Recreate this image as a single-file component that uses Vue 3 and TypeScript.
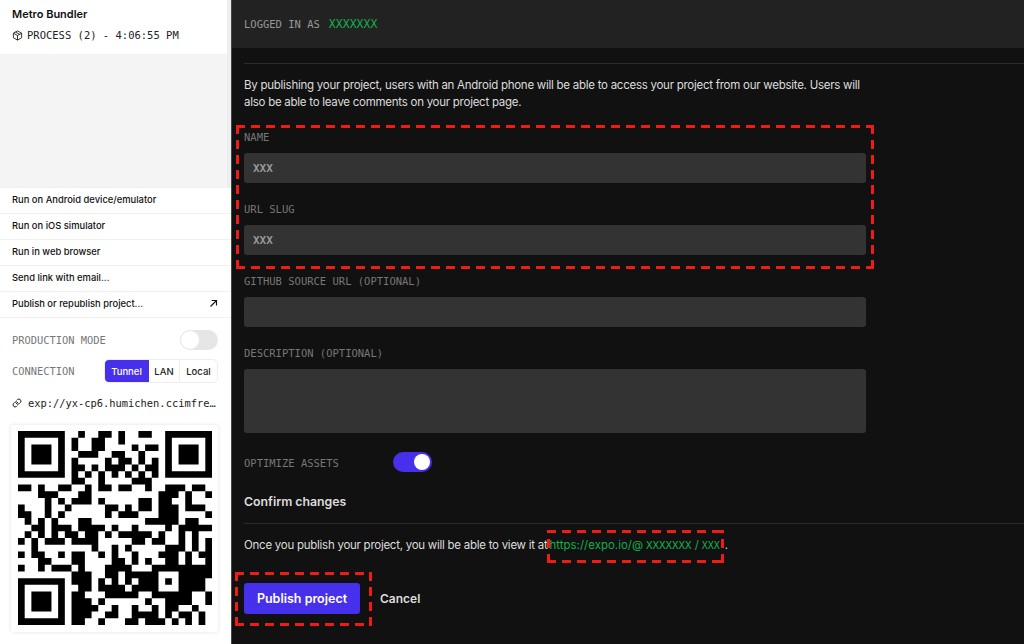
<script setup lang="ts">
const qrCells: number[][] = [
  [9, 12, 13, 15, 18, 19],
  [8, 11, 12, 15],
  [8, 11, 12, 17, 19, 20],
  [9, 10, 11, 14, 15, 18],
  [8, 13, 15, 16, 18, 20],
  [8, 9, 11, 13, 14, 15, 17, 19, 20],
  [8, 10, 12, 14, 16, 18, 20],
  [8, 9, 12, 17, 18, 19],
  [0, 1, 3, 6, 7, 10, 12, 13, 15, 16, 19, 22, 23, 24, 26, 27],
  [3, 4, 5, 9, 10, 21, 22, 23, 25, 28],
  [4, 6, 8, 9, 10, 12, 18, 19, 21, 22, 25],
  [0, 4, 7, 13, 14, 16, 18, 19, 21, 22, 23, 25, 26, 27],
  [0, 1, 4, 6, 13, 15, 16, 17, 21, 22, 23, 28],
  [1, 3, 5, 9, 10, 19, 20, 21, 22, 23, 25, 26],
  [2, 3, 5, 6, 7, 9, 10, 11, 12, 14, 17, 22, 24, 25, 26, 27, 28],
  [1, 3, 5, 7, 8, 10, 11, 13, 15, 16, 17, 18, 19, 21, 24, 26],
  [0, 2, 4, 5, 6, 8, 9, 10, 11, 17, 18, 20, 21, 24, 26, 28],
  [2, 11, 14, 16, 22, 23, 24, 26, 28],
  [0, 2, 3, 6, 8, 9, 12, 14, 17, 21, 22, 23, 25, 27, 28],
  [3, 4, 8, 9, 14, 15, 17, 19, 22, 23, 25, 28],
  [0, 3, 5, 6, 7, 9, 13, 14, 15, 16, 20, 21, 22, 23, 24, 25, 26, 27, 28],
  [8, 9, 10, 13, 14, 16, 17, 18, 19, 20, 24, 25, 26, 27, 28],
  [8, 9, 10, 12, 14, 16, 18, 19, 20, 22, 24, 25, 26, 27],
  [9, 10, 12, 13, 14, 15, 17, 18, 19, 20, 24, 25, 26, 27],
  [8, 9, 13, 14, 15, 16, 17, 20, 21, 22, 23, 24, 25, 28],
  [8, 9, 10, 12, 19, 22, 23, 24, 25, 28],
  [8, 9, 10, 11, 14, 17, 20, 22, 23, 26],
  [8, 9, 10, 13, 14, 17, 18, 19, 20, 22, 24, 25, 27],
  [8, 9, 12, 16, 17, 19, 20, 21, 23, 25, 27]
]

function finder(x: number, y: number): string {
  return `M${x} ${y}h7v7h-7zM${x + 1} ${y + 1}v5h5v-5zM${x + 2} ${y + 2}h3v3h-3z`
}

const qrPath: string =
  finder(0, 0) +
  finder(22, 0) +
  finder(0, 22) +
  qrCells
    .map((cols, y) => cols.map((x) => `M${x} ${y}h1v1h-1z`).join(''))
    .join('')

const menuItems: string[] = [
  'Run on Android device/emulator',
  'Run on iOS simulator',
  'Run in web browser',
  'Send link with email...'
]
</script>

<template>
  <div class="page">
    <aside class="side">
      <header class="side-head">
        <div class="title">Metro Bundler</div>
        <div class="process">
          <svg viewBox="0 0 24 24" width="11" height="11" fill="none" stroke="#222" stroke-width="2">
            <path d="M12 2 21 7v10l-9 5-9-5V7z" />
            <path d="M3 7l9 5 9-5M12 12v10M7.5 4.5l9 5" />
          </svg>
          <span>PROCESS (2) - 4:06:55 PM</span>
        </div>
      </header>
      <div class="logs"></div>
      <nav class="menu">
        <div v-for="m in menuItems" :key="m" class="menu-item">{{ m }}</div>
        <div class="menu-item">
          <span>Publish or republish project...</span>
          <svg viewBox="0 0 12 12" width="9" height="9" fill="none" stroke="#111" stroke-width="1.5">
            <path d="M2 10 10 2M3.5 2H10v6.5" />
          </svg>
        </div>
      </nav>
      <div class="row prod">
        <span class="mono-label">PRODUCTION MODE</span>
        <span class="switch-off"><i></i></span>
      </div>
      <div class="row conn">
        <span class="mono-label">CONNECTION</span>
        <div class="seg">
          <span class="seg-item active">Tunnel</span>
          <span class="seg-item lan">LAN</span>
          <span class="seg-item local">Local</span>
        </div>
      </div>
      <div class="url">
        <svg viewBox="0 0 24 24" width="10" height="10" fill="none" stroke="#222" stroke-width="2.4" stroke-linecap="round">
          <path d="M10 13a5 5 0 0 0 7.5.5l3-3a5 5 0 0 0-7-7l-1.7 1.7" />
          <path d="M14 11a5 5 0 0 0-7.5-.5l-3 3a5 5 0 0 0 7 7l1.7-1.7" />
        </svg>
        <span class="url-text">exp://yx-cp6.humichen.ccimfre…</span>
      </div>
      <div class="qr-card">
        <svg class="qr" viewBox="0 0 29 29" width="194" height="194">
          <path :d="qrPath" fill="#000" fill-rule="evenodd" />
        </svg>
      </div>
    </aside>

    <main class="main">
      <div class="top">
        <span class="top-label">LOGGED IN AS</span>
        <span class="top-user">XXXXXXX</span>
      </div>
      <div class="content">
        <hr class="rule" />
        <p class="intro">By publishing your project, users with an Android phone will be able to access your project from our website. Users will also be able to leave comments on your project page.</p>

        <div class="group">
          <i class="dash dash-fields"></i>
          <label class="f-label">NAME</label>
          <div class="input">XXX</div>
          <label class="f-label next">URL SLUG</label>
          <div class="input">XXX</div>
        </div>

        <label class="f-label next">GITHUB SOURCE URL (OPTIONAL)</label>
        <div class="input"></div>
        <label class="f-label next">DESCRIPTION (OPTIONAL)</label>
        <div class="input area"></div>

        <div class="opt">
          <span class="f-label opt-label">OPTIMIZE ASSETS</span>
          <span class="switch-on"><i></i></span>
        </div>

        <h3 class="confirm">Confirm changes</h3>
        <hr class="rule rule2" />
        <p class="once">Once you publish your project, you will be able to view it at <span class="link-box"><i class="dash dash-link"></i><span class="green">https://expo.io/@<span class="mono user">XXXXXXX</span><span class="slash">/</span><span class="mono">XXX</span></span></span><span class="dot">.</span></p>

        <div class="actions">
          <div class="btn-box">
            <i class="dash dash-btn"></i>
            <button class="publish">Publish project</button>
          </div>
          <span class="cancel">Cancel</span>
        </div>
      </div>
    </main>
  </div>
</template>

<style>
html, body { margin: 0; background: #111; }
</style>

<style scoped>
.page {
  display: flex;
  width: 1024px;
  height: 644px;
  overflow: hidden;
  font-family: Inter, "Liberation Sans", sans-serif;
  background: #111;
}
.side {
  width: 231px;
  flex: none;
  background: #fff;
  border-right: 1px solid #444;
  display: flex;
  flex-direction: column;
}
.side-head {
  height: 54px;
  box-sizing: border-box;
  padding: 8px 0 0 12px;
  border-right: 4px solid #eee;
}
.title { font-size: 11px; font-weight: 600; color: #111; line-height: 12px; }
.process {
  display: flex;
  align-items: center;
  gap: 4px;
  margin-top: 9px;
  font-family: "DejaVu Sans Mono", monospace;
  font-size: 10.5px;
  color: #222;
  line-height: 12px;
}
.logs {
  height: 133px;
  background: #f4f4f4;
  border-right: 4px solid #eee;
}
.menu-item {
  height: 26px;
  box-sizing: border-box;
  padding: 0 13px 2px 12px;
  border-top: 1px solid #f0f0f0;
  display: flex;
  align-items: center;
  justify-content: space-between;
  font-size: 9.4px;
  font-weight: 500;
  color: #111;
}
.menu-item:last-child { border-bottom: 1px solid #f0f0f0; height: 27px; }
.row {
  display: flex;
  align-items: center;
  justify-content: space-between;
  padding: 0 13px 0 12px;
}
.prod { margin-top: 12px; height: 20px; }
.conn { margin-top: 9px; height: 24px; }
.mono-label {
  font-family: "DejaVu Sans Mono", monospace;
  font-size: 10.4px;
  color: #777;
}
.switch-off {
  width: 38px;
  height: 20px;
  border-radius: 10px;
  background: #e6e6e6;
  position: relative;
}
.switch-off i {
  position: absolute;
  left: 0;
  top: 0;
  width: 18px;
  height: 18px;
  border-radius: 50%;
  background: #fff;
  border: 1px solid #e6e6e6;
}
.seg {
  display: flex;
  height: 24px;
  border: 1px solid #eee;
  border-radius: 5px;
  box-sizing: border-box;
  overflow: hidden;
  font-size: 9.5px;
  font-weight: 500;
  color: #222;
}
.seg-item { display: flex; align-items: center; justify-content: center; }
.active { width: 45px; background: #4630eb; color: #fff; margin: -1px 0 -1px -1px; }
.lan { width: 30px; border-right: 1px solid #eee; }
.local { width: 37px; }
.url {
  display: flex;
  align-items: center;
  gap: 6px;
  padding: 14px 12px 0;
  height: 26px;
  box-sizing: border-box;
  font-family: "DejaVu Sans Mono", monospace;
  font-size: 10.4px;
  color: #222;
}
.url-text { white-space: nowrap; }
.qr-card {
  margin: 16px 0 0 11px;
  width: 207px;
  height: 207px;
  box-sizing: border-box;
  padding: 6px 0 0 7px;
  background: #fff;
  border-radius: 3px;
  box-shadow: 0 0 4px rgba(0, 0, 0, 0.12);
}
.qr { display: block; }

.main {
  flex: 1;
  min-width: 0;
  color: #ddd;
}
.top {
  height: 48px;
  box-sizing: border-box;
  background: #222;
  display: flex;
  align-items: center;
  padding-left: 12px;
  font-family: "DejaVu Sans Mono", monospace;
  font-size: 10.5px;
}
.top-label { color: #999; }
.top-user { color: #12b04c; margin-left: 9px; font-size: 11.5px; }
.content { padding: 15px 0 0 12px; width: 780px; }
.rule { border: 0; border-top: 1px solid #2c2c2c; margin: 0; }
.intro {
  margin: 13px 0 0;
  width: 622px;
  font-size: 11.5px;
  letter-spacing: -0.26px;
  line-height: 17px;
  color: #ddd;
}
.group {
  position: relative;
  margin-top: 20px;
  width: 622px;
}
.dash {
  position: absolute;
  pointer-events: none;
  background:
    repeating-linear-gradient(90deg, #ee1c14 0 9px, transparent 9px 15px) top / 100% 3px no-repeat,
    repeating-linear-gradient(90deg, #ee1c14 0 9px, transparent 9px 15px) bottom / 100% 3px no-repeat,
    repeating-linear-gradient(0deg, #ee1c14 0 9px, transparent 9px 15px) left / 3px 100% no-repeat,
    repeating-linear-gradient(0deg, #ee1c14 0 9px, transparent 9px 15px) right / 3px 100% no-repeat;
}
.dash-fields { left: -8px; top: -6px; width: 638px; height: 144px; }
.dash-link { left: -2px; top: -8px; width: 177px; height: 33px; }
.dash-btn { left: -9px; top: -11px; width: 137px; height: 54px; }
.f-label {
  display: block;
  font-family: "DejaVu Sans Mono", monospace;
  font-size: 10.5px;
  line-height: 12px;
  color: #777;
}
.input {
  width: 622px;
  height: 30px;
  margin-top: 10px;
  box-sizing: border-box;
  background: #333;
  border-radius: 3px;
  padding-left: 9px;
  display: flex;
  align-items: center;
  font-family: "DejaVu Sans Mono", monospace;
  font-size: 11px;
  font-weight: 700;
  color: #999;
}
.next { margin-top: 20px; }
.area { height: 64px; }
.opt { display: flex; align-items: center; margin-top: 19px; height: 20px; }
.opt-label { width: 149px; padding-top: 2px; }
.switch-on {
  width: 39px;
  height: 20px;
  border-radius: 10px;
  background: #4630eb;
  position: relative;
}
.switch-on i {
  position: absolute;
  right: 2px;
  top: 2px;
  width: 16px;
  height: 16px;
  border-radius: 50%;
  background: #fff;
}
.confirm {
  margin: 22px 0 0;
  font-size: 12.3px;
  font-weight: 600;
  line-height: 16px;
  color: #ddd;
}
.rule2 { margin-top: 13px; }
.once {
  margin: 13px 0 0;
  font-size: 11.5px;
  letter-spacing: -0.26px;
  line-height: 17px;
  color: #ddd;
  white-space: nowrap;
}
.link-box { position: relative; margin-left: -1px; }
.green { color: #12b04c; letter-spacing: 0; }
.mono { font-family: "DejaVu Sans Mono", monospace; font-size: 10px; letter-spacing: 0; }
.user { font-size: 10.8px; margin-left: 3px; }
.slash { margin: 0 3px; }
.dot { margin-left: 5px; }
.actions {
  display: flex;
  align-items: center;
  margin-top: 29px;
}
.btn-box { position: relative; }
.publish {
  display: block;
  width: 116px;
  height: 31px;
  border: 0;
  border-radius: 3px;
  background: #4630eb;
  color: #fff;
  font-family: inherit;
  font-size: 12.5px;
  font-weight: 600;
  padding: 0;
}
.cancel { margin-left: 20px; font-size: 12px; font-weight: 600; color: #ddd; }
</style>
